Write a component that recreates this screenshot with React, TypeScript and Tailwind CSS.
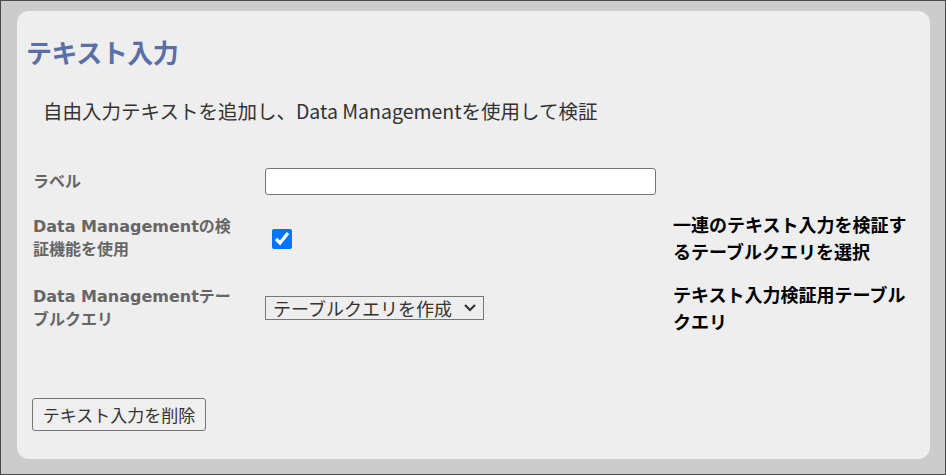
import React from "react";

const FONT = { fontFamily: '"Noto Sans CJK JP", "Noto Sans", sans-serif' };
const LABEL_FONT = { fontFamily: '"DejaVu Sans", "Noto Sans CJK JP", sans-serif' };

export default function App() {
  return (
    <div
      className="w-[946px] h-[475px] border border-[#4a4a4a] bg-[#cccccc] pt-[10px] pl-[16px] pr-[15px] pb-[15px]"
      style={FONT}
    >
      <div className="h-full w-full rounded-[12px] bg-[#eeeeee] flex flex-col">
        <h1 className="ml-[9px] mt-[24px] text-[26px] leading-[34px] font-bold text-[#5a6ea8] tracking-[-0.5px]">
          テキスト入力
        </h1>
        <p className="ml-[26px] mt-[29px] text-[19.5px] leading-[26px] text-[#333333]">
          自由入力テキストを追加し、Data Managementを使用して検証
        </p>
        <div className="ml-[16px] mt-[44px] grid grid-cols-[232px_408px_240px] gap-y-[20px] items-start">
          <div className="text-[16px] leading-[23px] font-bold text-[#666666] pt-[2px]" style={LABEL_FONT}>
            ラベル
          </div>
          <div>
            <input
              type="text"
              className="block w-[391px] h-[27px] bg-white border border-[#767676] rounded-[3px]"
            />
          </div>
          <div />

          <div className="text-[16px] leading-[23px] font-bold text-[#666666] pr-[24px]" style={LABEL_FONT}>
            Data Managementの検証機能を使用
          </div>
          <div className="pt-[14px] pl-[7px]">
            <input type="checkbox" defaultChecked className="block w-[20px] h-[20px] m-0 accent-[#0075ff]" />
          </div>
          <div className="text-[18px] leading-[27px] font-bold text-black -mt-[4px]">
            一連のテキスト入力を検証するテーブルクエリを選択
          </div>

          <div className="text-[16px] leading-[23px] font-bold text-[#666666] pr-[24px]" style={LABEL_FONT}>
            Data Managementテーブルクエリ
          </div>
          <div className="pt-[11px]">
            <div className="relative w-[219px] h-[24px] border border-[#767676] flex items-center">
              <span className="pl-[7px] text-[18px] leading-[22px] text-[#333333]">テーブルクエリを作成</span>
              <svg className="absolute right-[6px] top-[6px]" width="14" height="10" viewBox="0 0 14 10">
                <path d="M2 2 L7 7 L12 2" fill="none" stroke="#333" strokeWidth="2.2" />
              </svg>
            </div>
          </div>
          <div className="text-[18px] leading-[27px] font-bold text-black -mt-[4px]">
            テキスト入力検証用テーブルクエリ
          </div>
        </div>
        <div className="ml-[15px] mt-auto mb-[28px]">
          <button className="w-[174px] h-[33px] border border-[#767676] rounded-[3px] bg-[#efefef] text-[17px] text-[#333333]">
            テキスト入力を削除
          </button>
        </div>
      </div>
    </div>
  );
}
